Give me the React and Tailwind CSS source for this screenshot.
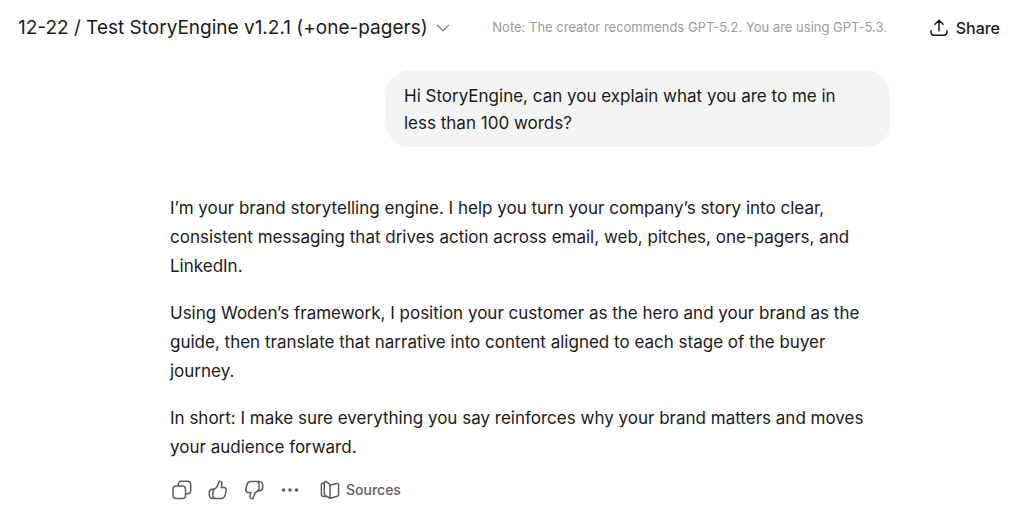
const paragraphs = [
  'I’m your brand storytelling engine. I help you turn your company’s story into clear, consistent messaging that drives action across email, web, pitches, one-pagers, and LinkedIn.',
  'Using Woden’s framework, I position your customer as the hero and your brand as the guide, then translate that narrative into content aligned to each stage of the buyer journey.',
  'In short: I make sure everything you say reinforces why your brand matters and moves your audience forward.',
]

function Icon({ children, className = 'size-5', strokeWidth = 1.5 }) {
  return (
    <svg
      viewBox="0 0 20 20"
      fill="none"
      stroke="currentColor"
      strokeWidth={strokeWidth}
      strokeLinecap="round"
      strokeLinejoin="round"
      aria-hidden="true"
      className={className}
    >
      {children}
    </svg>
  )
}

function CopyIcon() {
  return (
    <Icon>
      <rect x="1" y="6" width="12.5" height="12.5" rx="3" />
      <path d="M6.3 5.8V4.3a3 3 0 0 1 3-3h6.4a3 3 0 0 1 3 3v6.4a3 3 0 0 1-3 3h-2" />
    </Icon>
  )
}

// Shared by both votes, flipped for the dislike button
function ThumbIcon({ className }) {
  return (
    <Icon className={className}>
      <path d="M6 9.2c2-.8 3.5-2.5 4.2-4.9l.6-2.1c.2-.7.8-1 1.5-.8 1.300.4 1.900 1.600 1.600 2.900l-.8 3.300h2.700c1.700 0 2.800 1.500 2.400 3.100l-1.200 4.700c-.5 1.900-1.900 3.100-3.900 3.100H5.200c-2.400 0-3.900-1.500-3.900-3.800v-2.300c0-2 1.200-3.200 3.200-3.200H6" />
      <path d="M6 9.300c-.8.8-1.100 1.800-1.100 3.100v2.500c0 1.500.4 2.700 1.400 3.500" />
    </Icon>
  )
}

function MoreIcon() {
  return (
    <Icon>
      <g fill="currentColor" stroke="none">
        <circle cx="3.5" cy="10" r="1.800" />
        <circle cx="10" cy="10" r="1.800" />
        <circle cx="16.5" cy="10" r="1.800" />
      </g>
    </Icon>
  )
}

function SourcesIcon() {
  return (
    <Icon>
      <path d="M4.300 3.400 2.900 3.200c-.9-.1-1.500.4-1.500 1.300v10.200c0 .8.5 1.400 1.300 1.500l3.300.5" />
      <path d="M4.300 2.700c0-1 .9-1.500 1.700-1l2.700 1.700c.8.5 1.300 1.300 1.300 2.300v12.600l-4.400-2.700c-.8-.5-1.300-1.300-1.300-2.300z" />
      <path d="m10 5.200 6.900-1.700c.9-.2 1.700.4 1.700 1.300v9.900c0 .8-.5 1.400-1.300 1.500L10 18.300" />
    </Icon>
  )
}

export default function App() {
  return (
    <div className="bg-white font-['Inter',sans-serif] text-[#1a1a1a]">
      <header className="flex h-14 items-center justify-between gap-4 pr-6 pl-[18px]">
        <button className="flex items-center gap-2 text-[19px]">
          12-22 / Test StoryEngine v1.2.1 (+one-pagers)
          <Icon className="size-3.5 text-[#8f8f8f]" strokeWidth={2}>
            <path d="m2 6 8 8 8-8" />
          </Icon>
        </button>
        <p className="text-[13px] text-[#9b9b9b]">Note: The creator recommends GPT-5.2. You are using GPT-5.3.</p>
        <button className="flex items-center gap-2 text-[16px] font-medium">
          <Icon className="size-[18px]" strokeWidth={1.7}>
            <path d="M10 13V1.5M5.500 5.800 10 1.300l4.500 4.500M1.200 13.200v1.600c0 2 1.200 3.200 3.200 3.200h11.200c2 0 3.200-1.200 3.200-3.200v-1.600" />
          </Icon>
          Share
        </button>
      </header>

      <main className="mx-auto max-w-[756px] pt-3.5 pl-9">
        <div className="ml-auto w-[70%] rounded-[24px] bg-[#f4f4f4] px-[18px] pt-[13px] pb-2.5 text-[17px] leading-[27px]">
          Hi StoryEngine, can you explain what you are to me in less than 100 words?
        </div>

        <div className="mt-[47px] space-y-[18px] text-[17px] leading-[29px]">
          {paragraphs.map(text => <p key={text}>{text}</p>)}
        </div>

        <div className="mt-[17px] flex items-center gap-4 pl-0.5 text-[#5d5d5d]">
          <button aria-label="Copy"><CopyIcon /></button>
          <button aria-label="Good response"><ThumbIcon className="size-5" /></button>
          <button aria-label="Bad response"><ThumbIcon className="size-5 rotate-180" /></button>
          <button aria-label="More actions"><MoreIcon /></button>
          <button className="ml-1 flex items-center gap-1.5 text-[14px] font-medium">
            <SourcesIcon />
            Sources
          </button>
        </div>
      </main>
    </div>
  )
}
